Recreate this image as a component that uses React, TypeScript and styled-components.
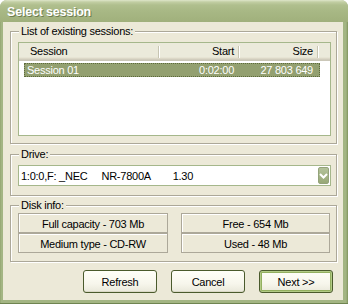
import React from 'react';
import styled, { createGlobalStyle } from 'styled-components';

const Global = createGlobalStyle`
  html, body { margin: 0; padding: 0; background: #ffffff; }
  body { font-family: Tahoma, "Liberation Sans", Arial, sans-serif; font-size: 11px; letter-spacing: -0.25px; color: #000; }
  #root { width: 348px; height: 304px; }
`;

const Window = styled.div`
  width: 348px;
  height: 304px;
  box-sizing: border-box;
  display: flex;
  flex-direction: column;
  background: linear-gradient(to right, #8da06a 0, #a3b583 1px, #a3b583 calc(100% - 2px), #7f935c 100%);
  border-radius: 7px 7px 0 0;
  overflow: hidden;
  border-bottom: 1px solid #6f8450;
`;

const TitleBar = styled.div`
  height: 22px;
  flex: none;
  display: flex;
  align-items: center;
  padding: 1px 0 0 7px;
  box-sizing: border-box;
  background: linear-gradient(to bottom, #dfe6ca 0px, #c2cea3 2px, #b0bf8e 5px, #a8b885 11px, #a3b37f 18px, #a0b07c 22px);
  color: #fff;
  font-family: "Liberation Sans", Arial, sans-serif;
  font-weight: bold;
  font-size: 12.5px;
  letter-spacing: -0.2px;
  text-shadow: 1px 1px 0 #6e7d50;
`;

const Client = styled.div`
  flex: 1;
  margin: 0 5px 3px 3px;
  background: #ece9d8;
  padding: 9px 6px 7px 7px;
  display: flex;
  flex-direction: column;
`;

const Group = styled.div<{ $h: number; $mt?: number }>`
  position: relative;
  box-sizing: border-box;
  width: 327px;
  height: ${p => p.$h}px;
  margin-top: ${p => p.$mt ?? 0}px;
  border: 1px solid #aca899;
  box-shadow: 1px 1px 0 #fff, inset 1px 1px 0 #fff;
`;

const Legend = styled.span`
  position: absolute;
  top: -7px;
  left: 8px;
  padding: 0 2px;
  line-height: 13px;
  background: #ece9d8;
`;

const ListView = styled.div`
  position: absolute;
  left: 7px;
  top: 10px;
  width: 313px;
  height: 94px;
  box-sizing: border-box;
  border: 1px solid #a5b78b;
  background: #fff;
`;

const Header = styled.div`
  display: flex;
  height: 18px;
  background: linear-gradient(to bottom, #ebeadb 0, #ebeadb 14px, #e2decd 15px, #d6d2c2 16px, #cbc7b8 17px);
`;

const HeadCell = styled.div<{ $w: number; $right?: boolean; $pl?: number }>`
  position: relative;
  width: ${p => p.$w}px;
  box-sizing: border-box;
  display: flex;
  align-items: center;
  justify-content: ${p => (p.$right ? 'flex-end' : 'flex-start')};
  padding: 0 5px 2px ${p => p.$pl ?? 6}px;
  &::after {
    content: '';
    position: absolute;
    right: 0;
    top: 3px;
    height: 12px;
    width: 1px;
    background: #c7c5b2;
    box-shadow: 1px 0 0 #fff;
  }
`;

const Row = styled.div`
  display: flex;
  margin: 2px 0 0 5px;
  width: 296px;
  height: 14px;
  box-sizing: border-box;
  background: #93a070;
  color: #fff;
  outline: 1px dotted #5d6a3c;
  outline-offset: -1px;
`;

const Cell = styled.div<{ $w: number; $right?: boolean; $pl?: number }>`
  width: ${p => p.$w}px;
  box-sizing: border-box;
  display: flex;
  align-items: center;
  justify-content: ${p => (p.$right ? 'flex-end' : 'flex-start')};
  padding: 0 5px 0 ${p => p.$pl ?? 0}px;
`;

const Combo = styled.div`
  position: absolute;
  left: 7px;
  top: 10px;
  width: 313px;
  height: 21px;
  box-sizing: border-box;
  border: 1px solid #a5b78b;
  background: #fff;
  display: flex;
  align-items: center;
  padding: 0 1px 0 2px;
`;

const ComboText = styled.span`
  flex: 1;
  white-space: pre;
`;

const DropButton = styled.div`
  width: 11px;
  height: 17px;
  box-sizing: border-box;
  border: 1px solid #94a37a;
  border-radius: 2px;
  background: linear-gradient(to bottom, #b3c29a, #98a877);
  display: flex;
  align-items: center;
  justify-content: center;
`;

const InfoGrid = styled.div`
  position: absolute;
  left: 7px;
  top: 7px;
  display: grid;
  grid-template-columns: 150px 149px;
  grid-auto-rows: 20px;
  column-gap: 13px;
`;

const InfoCell = styled.div`
  box-sizing: border-box;
  border: 1px solid #aca899;
  box-shadow: inset 1px 1px 0 #fff;
  display: flex;
  align-items: center;
  justify-content: center;
  padding-top: 1px;
`;

const Buttons = styled.div`
  display: flex;
  justify-content: flex-end;
  gap: 14px;
  margin-top: 8px;
  padding-right: 4px;
`;

const Button = styled.div<{ $default?: boolean }>`
  width: 74px;
  height: 23px;
  box-sizing: border-box;
  border: 1px solid #4a5a2c;
  border-radius: 3px;
  background: linear-gradient(to bottom, #fffff8 0%, #f7f6ec 60%, #e9e8da 100%);
  display: flex;
  align-items: center;
  justify-content: center;
  box-shadow: ${p => (p.$default ? 'inset 0 0 0 1px #b3cb87, inset 0 0 0 2px #93b060' : 'inset 0 -1px 0 #dad8c6')};
`;

export default function App() {
  return (
    <>
      <Global />
      <Window>
        <TitleBar>Select session</TitleBar>
        <Client>
          <Group $h={113}>
            <Legend>List of existing sessions:</Legend>
            <ListView>
              <Header>
                <HeadCell $w={140} $pl={11}>Session</HeadCell>
                <HeadCell $w={80} $right>Start</HeadCell>
                <HeadCell $w={79} $right>Size</HeadCell>
              </Header>
              <Row>
                <Cell $w={135} $pl={3}>Session 01</Cell>
                <Cell $w={80} $right>0:02:00</Cell>
                <Cell $w={79} $right>27 803 649</Cell>
              </Row>
            </ListView>
          </Group>
          <Group $h={42} $mt={10}>
            <Legend>Drive:</Legend>
            <Combo>
              <ComboText>{'1:0:0,F: _NEC     NR-7800A        1.30'}</ComboText>
              <DropButton>
                <svg width="9" height="8" viewBox="0 0 9 8">
                  <path d="M1 2 L4.5 5.5 L8 2" fill="none" stroke="#fff" strokeWidth="2" />
                </svg>
              </DropButton>
            </Combo>
          </Group>
          <Group $h={57} $mt={9}>
            <Legend>Disk info:</Legend>
            <InfoGrid>
              <InfoCell>Full capacity - 703 Mb</InfoCell>
              <InfoCell>Free - 654 Mb</InfoCell>
              <InfoCell>Medium type - CD-RW</InfoCell>
              <InfoCell>Used - 48 Mb</InfoCell>
            </InfoGrid>
          </Group>
          <Buttons>
            <Button>Refresh</Button>
            <Button>Cancel</Button>
            <Button $default>Next &gt;&gt;</Button>
          </Buttons>
        </Client>
      </Window>
    </>
  );
}
